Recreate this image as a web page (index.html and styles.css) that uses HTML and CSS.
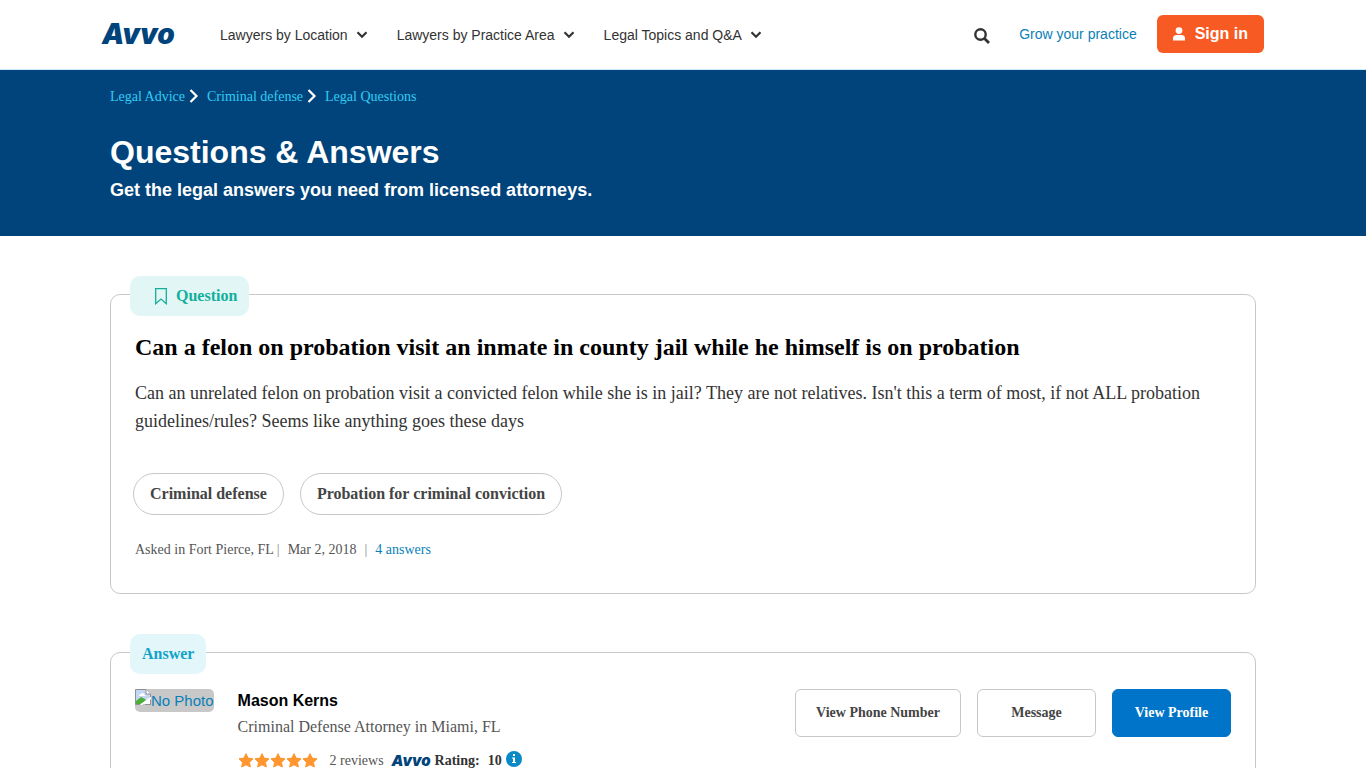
FILE: index.html
```html
<!DOCTYPE html>
<html lang="en">
<head>
<meta charset="utf-8">
<meta name="viewport" content="width=device-width, initial-scale=1">
<title>Questions &amp; Answers - Avvo</title>
<link rel="stylesheet" href="styles.css">
</head>
<body>
<svg class="defs" aria-hidden="true">
  <symbol id="chevron-down" viewBox="0 0 12 8"><path d="M1.5 1.3 6 5.8l4.500-4.500" fill="none" stroke="currentColor" stroke-width="2.200"/></symbol>
  <symbol id="chevron-right" viewBox="0 0 10 14"><path d="M1.500 1 7.500 7l-6 6" fill="none" stroke="currentColor" stroke-width="2.200"/></symbol>
  <symbol id="star" viewBox="0 0 16 16"><path d="M8 .700 10.200 5.100 15 5.800 11.500 9.200 12.300 14 8 11.800 3.700 14 4.500 9.200 1 5.800 5.800 5.100Z" fill="currentColor" stroke="currentColor" stroke-width="1" stroke-linejoin="round"/></symbol>
</svg>

<header class="site-header">
  <a class="logo" href="#">Avvo</a>
  <nav class="main-nav" aria-label="Main">
    <button type="button" class="nav-item">Lawyers by Location <svg class="nav-chevron"><use href="#chevron-down"/></svg></button>
    <button type="button" class="nav-item">Lawyers by Practice Area <svg class="nav-chevron"><use href="#chevron-down"/></svg></button>
    <button type="button" class="nav-item">Legal Topics and Q&amp;A <svg class="nav-chevron"><use href="#chevron-down"/></svg></button>
  </nav>
  <div class="header-tools">
    <button type="button" class="search-button" aria-label="Search">
      <svg viewBox="0 0 16 16" width="16" height="16"><circle cx="6.500" cy="6.500" r="5.200" fill="none" stroke="currentColor" stroke-width="2.400"/><path d="m10.500 10.500 4.500 4.500" stroke="currentColor" stroke-width="2.800"/></svg>
    </button>
    <a class="grow-link" href="#">Grow your practice</a>
    <a class="sign-in" href="#">
      <svg viewBox="0 0 12 14" width="12" height="14"><circle cx="6" cy="3.600" r="3.400" fill="currentColor"/><path d="M0 13.500v-2.300c0-2 1.600-3.200 3.500-3.200h5c1.900 0 3.500 1.200 3.500 3.200v2.300Z" fill="currentColor"/></svg>
      Sign in
    </a>
  </div>
</header>

<section class="banner">
  <div class="container">
    <nav class="breadcrumbs" aria-label="Breadcrumb">
      <a href="#">Legal Advice</a>
      <svg class="crumb-chevron"><use href="#chevron-right"/></svg>
      <a href="#">Criminal defense</a>
      <svg class="crumb-chevron"><use href="#chevron-right"/></svg>
      <a href="#">Legal Questions</a>
    </nav>
    <h1>Questions &amp; Answers</h1>
    <p class="tagline">Get the legal answers you need from licensed attorneys.</p>
  </div>
</section>

<main class="container">
  <article class="card question-card">
    <div class="badge badge-question">
      <svg viewBox="0 0 12 17" width="12" height="17"><path d="M.700.700h10.600v15L6 11 .700 15.700Z" fill="none" stroke="currentColor" stroke-width="1.300"/></svg>
      Question
    </div>
    <h2>Can a felon on probation visit an inmate in county jail while he himself is on probation</h2>
    <p class="question-text">Can an unrelated felon on probation visit a convicted felon while she is in jail? They are not relatives. Isn't this a term of most, if not ALL probation guidelines/rules? Seems like anything goes these days</p>
    <div class="topics">
      <a href="#">Criminal defense</a>
      <a href="#">Probation for criminal conviction</a>
    </div>
    <p class="meta"><span>Asked in Fort Pierce, FL</span><span class="divider first">|</span><span>Mar 2, 2018</span><span class="divider">|</span><a href="#">4 answers</a></p>
  </article>

  <article class="card answer-card">
    <div class="badge badge-answer">Answer</div>
    <div class="lawyer">
      <a class="photo" href="#">
        <svg viewBox="0 0 16 16" width="16" height="16"><path d="M1 1h10l4 4v10H1Z" fill="#c5d5f4"/><path d="M4 7c0-1.500 1-2 2-2 1-1.500 3-1 3 .500 1 0 1.500.500 1.500 1.500Z" fill="#fff"/><path d="M1 15v-3l5-4 4 2 1 2-5 3Z" fill="#4caf3a"/><path d="m6 15 9-6v6Z" fill="#fff"/><path d="M.500 15.500V.500H11L15.500 5v3M15.500 11v4.500H10M.500 15.500H6" fill="none" stroke="#909090"/><path d="M11 .500V5h4.500" fill="#fff" stroke="#909090"/><path d="m5.500 16 10.500-7.500" stroke="#fff" stroke-width="1.500"/></svg><span>No Photo</span>
      </a>
      <div class="lawyer-info">
        <h3>Mason Kerns</h3>
        <p class="specialty">Criminal Defense Attorney in Miami, FL</p>
        <div class="ratings">
          <span class="stars" role="img" aria-label="5 stars"><svg><use href="#star"/></svg><svg><use href="#star"/></svg><svg><use href="#star"/></svg><svg><use href="#star"/></svg><svg><use href="#star"/></svg></span>
          <span class="reviews">2 reviews</span>
          <span class="logo logo-small">Avvo</span>
          <strong>Rating:</strong>
          <strong class="score">10</strong>
          <button type="button" class="info" aria-label="About this rating"><svg viewBox="0 0 16 16" width="16" height="16"><circle cx="8" cy="8" r="8" fill="#0a89c7"/><path d="M7 3h2v2H7ZM6 6.500h3V11h1v1H6v-1h1V7.500H6Z" fill="#fff"/></svg></button>
        </div>
      </div>
      <div class="actions">
        <button type="button" class="action phone">View Phone Number</button>
        <button type="button" class="action">Message</button>
        <a class="action primary" href="#">View Profile</a>
      </div>
    </div>
  </article>
</main>
</body>
</html>
```

FILE: styles.css
```css
* {
  box-sizing: border-box;
}

body {
  margin: 0;
  color: #333;
  background: #fff;
  font-family: "Liberation Serif", "Times New Roman", serif;
  font-size: 16px;
}

h1, h2, h3, p {
  margin: 0;
}

a {
  color: #0a7fb8;
  text-decoration: none;
}

button {
  padding: 0;
  border: 0;
  background: none;
  color: inherit;
  font: inherit;
  cursor: pointer;
}

svg {
  display: block;
  flex: none;
}

.defs {
  position: absolute;
  width: 0;
  height: 0;
}

.container {
  max-width: 1170px;
  margin: 0 auto;
  padding: 0 12px;
}

.site-header {
  display: flex;
  align-items: center;
  max-width: 1162px;
  height: 69px;
  margin: 0 auto;
  font-family: "Liberation Sans", Arial, sans-serif;
  font-size: 14px;
}

.logo {
  color: #00447b;
  font-family: Inter, sans-serif;
  font-size: 28px;
  font-style: italic;
  font-weight: 900;
  line-height: 32px;
}

.site-header .logo {
  min-width: 74px;
  padding-bottom: 2px;
}

.main-nav {
  display: flex;
  gap: 29px;
  margin-left: 44px;
}

.nav-item {
  display: flex;
  align-items: center;
  gap: 8px;
  line-height: 20px;
}

.nav-chevron {
  width: 12px;
  height: 8px;
}

.header-tools {
  display: flex;
  align-items: center;
  margin: 0 0 2px auto;
}

.search-button {
  margin-right: 29px;
  padding-top: 4px;
}

.grow-link {
  margin-right: 20px;
}

.sign-in {
  display: flex;
  align-items: center;
  gap: 10px;
  height: 38px;
  padding: 0 16px;
  border-radius: 6px;
  background: #f85a23;
  color: #fff;
  font-size: 16px;
  font-weight: 700;
}

.banner {
  padding: 17px 0 35px;
  border-top: 1px solid #c9ecf8;
  background: #00447b;
  background-clip: padding-box;
  color: #fff;
  font-family: "Liberation Sans", Arial, sans-serif;
}

.breadcrumbs {
  display: flex;
  align-items: center;
  margin-bottom: 27px;
  font-family: "Liberation Serif", "Times New Roman", serif;
  font-size: 14px;
  line-height: 20px;
}

.breadcrumbs a {
  color: #33ccf5;
}

.crumb-chevron {
  width: 10px;
  height: 14px;
  margin: 0 8px 2px 4px;
}

h1 {
  font-size: 32px;
  line-height: 36px;
}

.tagline {
  margin-top: 9px;
  font-size: 18px;
  font-weight: 700;
  line-height: 22px;
}

.card {
  position: relative;
  padding: 36px 24px;
  border: 1px solid #c8c8c8;
  border-radius: 10px;
}

.question-card {
  margin-top: 58px;
  padding-bottom: 33px;
}

.answer-card {
  margin: 58px 0 40px;
}

.badge {
  position: absolute;
  top: -19px;
  left: 19px;
  display: flex;
  align-items: center;
  gap: 9px;
  height: 40px;
  padding: 0 12px;
  border-radius: 10px;
  font-weight: 700;
}

.badge-question {
  padding-left: 25px;
  background: #e3f6f6;
  color: #12b09b;
}

.badge-answer {
  background: #e3f6fa;
  color: #12a3c7;
}

h2 {
  color: #000;
  font-size: 24px;
  line-height: 32px;
}

.question-text {
  margin-top: 16px;
  font-size: 18px;
  line-height: 28px;
}

.topics {
  display: flex;
  gap: 16px;
  margin: 38px 0 0 -2px;
}

.topics a {
  padding: 0 16px;
  border: 1px solid #c8c8c8;
  border-radius: 21px;
  color: #444;
  font-weight: 700;
  line-height: 40px;
}

.meta {
  display: flex;
  margin-top: 25px;
  color: #555;
  font-size: 14px;
  line-height: 20px;
}

.divider {
  margin: 0 8px;
  color: #888;
}

.divider.first {
  margin-left: 3px;
}

.lawyer {
  display: flex;
  align-items: flex-start;
}

.photo {
  display: flex;
  margin-right: 24px;
  border-radius: 5px;
  background: #c8c8c8;
  font-family: "Liberation Sans", Arial, sans-serif;
  font-size: 15px;
  line-height: 23px;
}

.lawyer-info {
  flex: 1;
}

h3 {
  color: #000;
  font-family: "Liberation Sans", Arial, sans-serif;
  font-size: 16px;
  line-height: 24px;
}

.specialty {
  margin-top: 2px;
  color: #555;
  line-height: 24px;
}

.ratings {
  display: flex;
  align-items: center;
  margin-top: 10px;
  font-size: 14px;
  line-height: 24px;
}

.stars {
  display: flex;
  color: #ff962e;
}

.stars svg {
  width: 16px;
  height: 16px;
}

.reviews {
  margin: 0 8px 0 12px;
  color: #555;
}

.logo-small {
  margin-right: 4px;
  font-size: 15px;
  line-height: 24px;
}

.score {
  margin: 0 4px 0 8px;
}

.info {
  margin-bottom: 5px;
}

.actions {
  display: flex;
  gap: 16px;
}

.action {
  min-width: 119px;
  height: 48px;
  border: 1px solid #c8c8c8;
  border-radius: 6px;
  color: #444;
  font-size: 14px;
  font-weight: 700;
  line-height: 46px;
  text-align: center;
}

.phone {
  padding: 0 20px;
}

.primary {
  border-color: #0074c8;
  background: #0074c8;
  color: #fff;
}
```
